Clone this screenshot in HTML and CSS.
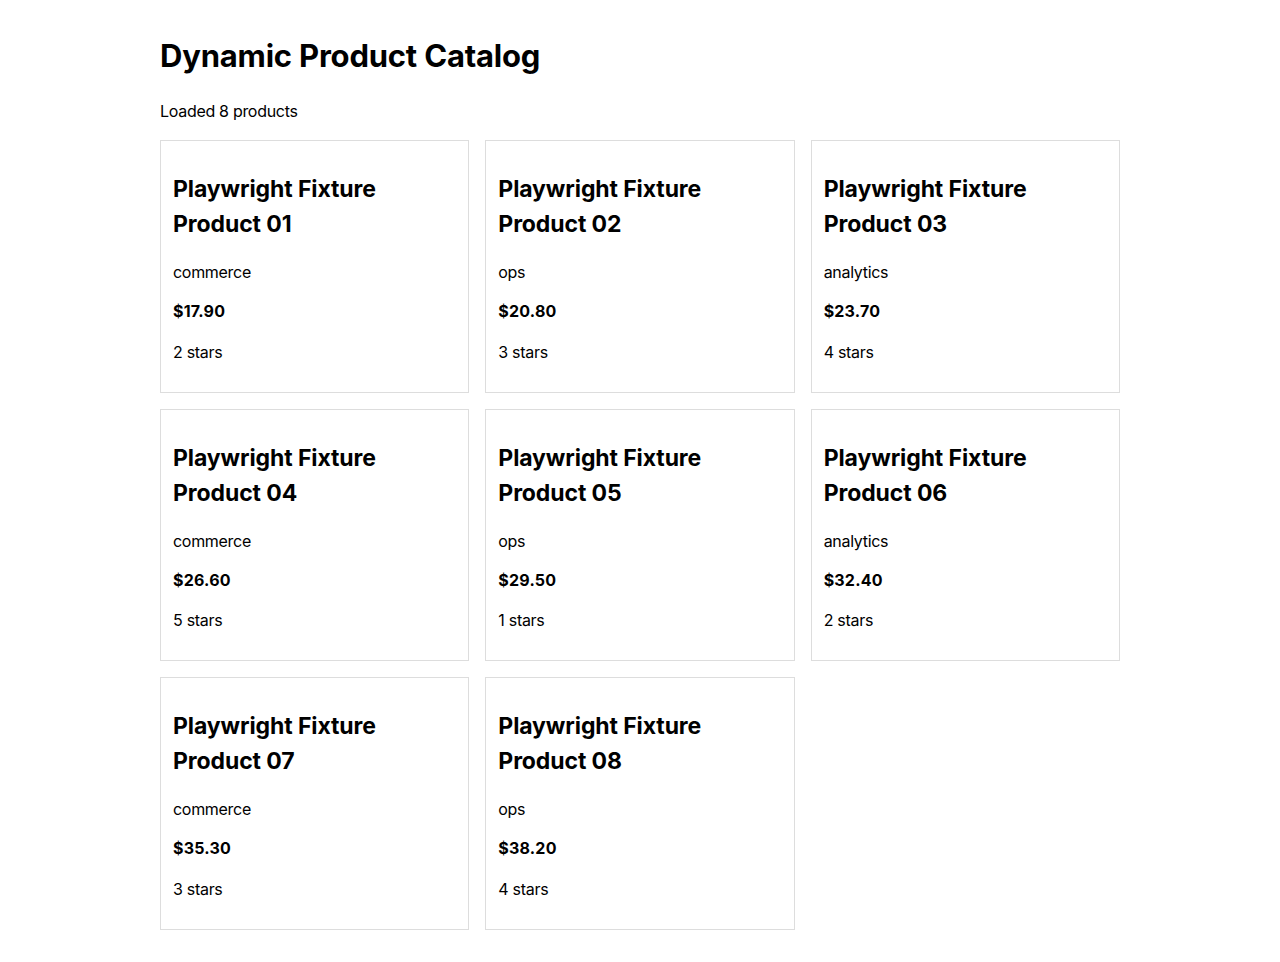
FILE: index.html
```html
<!DOCTYPE html>
<html lang="en">
<head>
<meta charset="utf-8">
<title>Dynamic Product Catalog</title>
<link rel="stylesheet" href="styles.css">
</head>
<body>
<main class="page">
  <h1 class="title">Dynamic Product Catalog</h1>
  <p class="status">Loaded 8 products</p>
  <section class="grid">
    <article class="card"><h2 class="card-title">Playwright Fixture Product 01</h2><p class="cat">commerce</p><p class="price">$17.90</p><p class="rating">2 stars</p></article>
    <article class="card"><h2 class="card-title">Playwright Fixture Product 02</h2><p class="cat">ops</p><p class="price">$20.80</p><p class="rating">3 stars</p></article>
    <article class="card"><h2 class="card-title">Playwright Fixture Product 03</h2><p class="cat">analytics</p><p class="price">$23.70</p><p class="rating">4 stars</p></article>
    <article class="card"><h2 class="card-title">Playwright Fixture Product 04</h2><p class="cat">commerce</p><p class="price">$26.60</p><p class="rating">5 stars</p></article>
    <article class="card"><h2 class="card-title">Playwright Fixture Product 05</h2><p class="cat">ops</p><p class="price">$29.50</p><p class="rating">1 stars</p></article>
    <article class="card"><h2 class="card-title">Playwright Fixture Product 06</h2><p class="cat">analytics</p><p class="price">$32.40</p><p class="rating">2 stars</p></article>
    <article class="card"><h2 class="card-title">Playwright Fixture Product 07</h2><p class="cat">commerce</p><p class="price">$35.30</p><p class="rating">3 stars</p></article>
    <article class="card"><h2 class="card-title">Playwright Fixture Product 08</h2><p class="cat">ops</p><p class="price">$38.20</p><p class="rating">4 stars</p></article>
  </section>
</main>
</body>
</html>
```
FILE: styles.css
```css
html, body {
  margin: 0;
  padding: 0;
  background: #fff;
  color: #000;
  font-family: Inter, "Noto Sans", sans-serif;
  font-size: 16px;
  line-height: 1.5;
  letter-spacing: -0.3px;
}
.page {
  max-width: 960px;
  margin: 0 auto;
  padding: 32px 0 32px;
}
.title {
  font-size: 31px;
  font-weight: 700;
  line-height: 48px;
  margin: 0 0 19px;
  letter-spacing: -0.2px;
}
.status {
  margin: 0 0 17px;
  line-height: 24px;
}
.grid {
  display: grid;
  grid-template-columns: repeat(3, 1fr);
  gap: 16px;
}
.card {
  border: 1px solid #ddd;
  padding: 12px;
}
.card-title {
  font-size: 23px;
  font-weight: 700;
  line-height: 35px;
  margin: 19px 0 18px;
  letter-spacing: -0.1px;
}
.card p {
  margin: 16px 0;
  line-height: 24px;
}
.card .price {
  font-size: 16px;
  font-weight: 700;
  line-height: 23.5px;
  letter-spacing: 0.2px;
}
.card .rating {
  margin-bottom: 16px;
}
```
